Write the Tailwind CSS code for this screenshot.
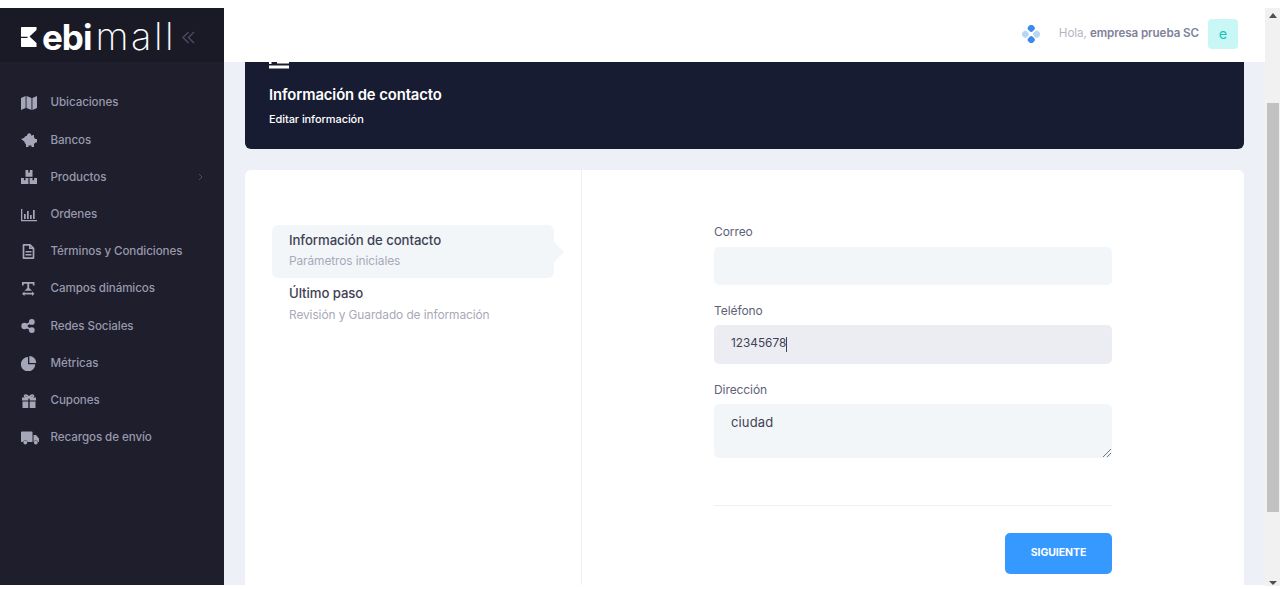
<!DOCTYPE html>
<html lang="es">
<head>
<meta charset="utf-8">
<script src="https://cdn.jsdelivr.net/npm/@tailwindcss/browser@4"></script>
<title>ebimall</title>
</head>
<body class="bg-white overflow-hidden">
<div class="h-[589px] w-[1280px] flex font-['Inter','Noto_Sans',sans-serif] tracking-[-0.005em]">
  <div class="w-[1265px] h-[585px] flex flex-col">
    <div class="h-[62px] flex">
      <div class="w-[224px] flex flex-col">
        <div class="h-[8px] bg-white"></div>
        <div class="h-[54px] bg-[#1a1a27] flex items-center pl-[21px]">
          <svg class="shrink-0 mt-[4px]" width="16" height="20" viewBox="0 0 16 20"><path fill="#fff" d="M1 0H15.500V3L8.500 9.500 15.500 16V20H1C.4 20 0 19.600 0 19V11H6.500V9.800H0V1C0 .4.400 0 1 0Z"/></svg>
          <div class="ml-[5px] mt-[1px] flex items-baseline text-white leading-none">
            <b class="font-bold text-[35px] tracking-[-1px]">ebi</b><span class="font-extralight text-[38px] tracking-[2.500px] ml-[4px]">mall</span>
          </div>
          <svg class="ml-[6px] mt-[4px]" width="13" height="13" viewBox="0 0 13 13" fill="none" stroke="#4b4b62" stroke-width="1.400"><path d="M6.500 1 1 6.500l5.500 5.500M12 1 6.500 6.500l5.500 5.500"/></svg>
        </div>
      </div>
      <div class="flex-1 bg-white flex items-center justify-end pr-[27px] pt-[6px]">
        <svg class="mr-[19px]" width="18" height="18" viewBox="0 0 18 18"><rect x="6" y="0" width="6.500" height="6.500" rx="2.500" fill="#3b8bea" transform="rotate(45 9.250 3.250)"/><rect x="6" y="11.500" width="6.500" height="6.500" rx="2.500" fill="#3b8bea" transform="rotate(45 9.250 14.750)"/><rect x="0" y="6" width="6.500" height="6.500" rx="2.500" fill="#b9d6f4" transform="rotate(45 3.250 9.250)"/><rect x="11.500" y="6" width="6.500" height="6.500" rx="2.500" fill="#b9d6f4" transform="rotate(45 14.750 9.250)"/></svg>
        <span class="text-[11.600px] text-[#b5b5c3] mr-[9px]">Hola, <b class="font-semibold text-[#7e8299]">empresa prueba SC</b></span>
        <div class="w-[30px] h-[30px] rounded-[4px] bg-[#c9f7f5] text-[#1bc5bd] text-[14.500px] flex items-center justify-center">e</div>
      </div>
    </div>
    <div class="flex-1 flex min-h-0">
      <nav class="w-[224px] bg-[#1e1e2d] pt-[22.500px] text-[11.600px] text-[#9899ac] font-medium">
        <ul class="flex flex-col">
          <li class="h-[37.2px] flex items-center pl-[21px]"><svg class="w-[16px] mr-[13.500px] shrink-0" width="16" height="14" viewBox="0 0 16 14" fill="#a5a6b8"><path d="M0 2 4.600 0v12L0 14ZM5.500 0l5 2v12l-5-2ZM11.400 2 16 0v12l-4.600 2Z"/></svg><span>Ubicaciones</span></li>
          <li class="h-[37.2px] flex items-center pl-[21px]"><svg class="w-[16px] mr-[13.500px] shrink-0 overflow-visible" width="16" height="14" viewBox="0 0 16 14" fill="#a5a6b8"><path d="M0 6 3 5C3.800 3.500 5 3 6 2.800 6 1 7 .2 8.300.2 9.500.2 10.300 1 10.300 2.800L13 1.800V4.500L14.500 6H16V9.500H14.500L13 11V14H10.500V12.500H7.500V14H5V11.500C4 10.500 3.500 9.500 3.300 8.500Z"/></svg><span>Bancos</span></li>
          <li class="h-[37.2px] flex items-center pl-[21px] pr-[21px]"><svg class="w-[16px] mr-[13.500px] shrink-0" width="16" height="14" viewBox="0 0 16 14" fill="#a5a6b8"><path fill-rule="evenodd" d="M4.500 0h7v6.800h-7ZM7.200 0v2.500h1.600V0ZM0 8h7.400v6H0ZM2.900 8v2.200h1.600V8ZM8.600 8H16v6H8.600ZM11.500 8v2.200h1.600V8Z"/></svg><span class="flex-1">Productos</span><svg width="5" height="8" viewBox="0 0 5 8" fill="none" stroke="#4b4b62"><path d="m1 1 3 3-3 3"/></svg></li>
          <li class="h-[37.2px] flex items-center pl-[21px]"><svg class="w-[16px] mr-[13.500px] shrink-0" width="16" height="14" viewBox="0 0 16 14" fill="#a5a6b8"><path d="M0 1h1.300v11H16v1.300H0ZM3 6h1.700v5H3ZM6 3h1.700v8H6ZM9 7h1.700v4H9ZM12 2h1.700v9H12Z"/></svg><span>Ordenes</span></li>
          <li class="h-[37.2px] flex items-center pl-[21px]"><svg class="w-[16px] mr-[13.500px] shrink-0" width="16" height="15" viewBox="0 0 16 15"><path fill="none" stroke="#a5a6b8" stroke-width="1.700" stroke-linejoin="round" d="M2.500 .9H9L12.500 4.400V14.100H2.500Z"/><path fill="#a5a6b8" d="M4.500 7h6v1.400h-6ZM4.500 10h6v1.400h-6ZM8 1h1.500v2.500H12.500V5H8Z"/></svg><span>Términos y Condiciones</span></li>
          <li class="h-[37.2px] flex items-center pl-[21px]"><svg class="w-[16px] mr-[13.500px] shrink-0" width="16" height="14" viewBox="0 0 16 14" fill="#a5a6b8"><path d="M1 0h12.500v3.500h-1.700V1.800H8.200v4.200L11 8.700H3.500L6.300 6V1.800H2.700v1.700H1ZM3.500 9.500v1.300h7.500V9.500L13.500 11.700 11 14v-1.400H3.500V14L1 11.700Z"/></svg><span>Campos dinámicos</span></li>
          <li class="h-[37.2px] flex items-center pl-[21px]"><svg class="w-[16px] mr-[13.500px] shrink-0" width="16" height="14" viewBox="0 0 16 14" fill="#a5a6b8"><circle cx="3.500" cy="7" r="3.200"/><circle cx="10.800" cy="2.900" r="2.900"/><circle cx="10.800" cy="11.100" r="2.900"/><path stroke="#a5a6b8" stroke-width="1.800" d="M3.500 7 10.800 2.900M3.500 7 10.800 11.100"/></svg><span>Redes Sociales</span></li>
          <li class="h-[37.2px] flex items-center pl-[21px]"><svg class="w-[16px] mr-[13.500px] shrink-0" width="16" height="15" viewBox="0 0 16 15" fill="#a5a6b8"><path d="M7 1V8.300H14.300A7.200 7.200 0 1 1 7 1Z"/><path d="M8.300 0A7 7 0 0 1 15.300 7H8.300Z"/></svg><span>Métricas</span></li>
          <li class="h-[37.2px] flex items-center pl-[21px]"><svg class="w-[16px] mr-[13.500px] shrink-0" width="16" height="14" viewBox="0 0 16 14" fill="#a5a6b8"><path d="M1 3.500h14v3H8.700v-2H7.300v2H1ZM1.500 7.500h5.800V14H1.500ZM8.700 7.500h5.800V14H8.700Z"/><path fill="none" stroke="#a5a6b8" stroke-width="1.500" d="M8 3.500C6 .5 3 .5 3.500 2.200 3.800 3.300 6 3.500 8 3.500 10 3.500 12.200 3.300 12.500 2.200 13 .5 10 .5 8 3.500Z"/></svg><span>Cupones</span></li>
          <li class="h-[37.2px] flex items-center pl-[21px]"><svg class="w-[18px] mr-[11.500px] shrink-0" width="18" height="14" viewBox="0 0 18 14" fill="#a5a6b8"><path d="M0 1.500C0 .8.500.5 1 .5h9.500c.6 0 1 .4 1 1V11H6.800A2.500 2.500 0 0 0 2 11H1c-.6 0-1-.4-1-1ZM12.500 4H15L18 7.500V11H17.200A2.500 2.500 0 0 0 12.500 11Z"/><circle cx="4.300" cy="11.500" r="1.900"/><circle cx="14.800" cy="11.500" r="1.900"/></svg><span>Recargos de envío</span></li>
        </ul>
      </nav>
      <main class="flex-1 bg-[#eef0f8] px-[21px] flex flex-col overflow-hidden">
        <section class="h-[87px] shrink-0 bg-[#181c32] rounded-b-[6px] pl-[24px] text-white">
          <svg class="block" width="20" height="7" viewBox="0 0 20 7" fill="#fff"><path d="M0 0h2.500v2H0ZM8 0h12v1.500H8ZM0 3.500h20V6.500H0Z"/></svg>
          <h2 class="text-[14.800px] font-semibold mt-[16px] leading-[20px]">Información de contacto</h2>
          <p class="text-[11px] font-medium mt-[7px] leading-[14px]">Editar información</p>
        </section>
        <section class="mt-[21px] flex-1 bg-white rounded-t-[6px] flex min-h-0">
          <aside class="w-[337px] border-r border-[#eef0f4] pt-[55px] pl-[27px]">
            <div class="relative w-[282px] h-[53px] bg-[#f3f6f9] rounded-[6px] pl-[17px] pt-[7px]">
              <p class="text-[13.200px] leading-[17px] text-[#3f4254] font-medium">Información de contacto</p>
              <p class="text-[11.900px] leading-[17px] mt-[2.500px] text-[#a9a9ba]">Parámetros iniciales</p>
              <div class="absolute -right-[10px] top-[17px] w-0 h-0 border-y-[10px] border-y-transparent border-l-[10px] border-l-[#f3f6f9]"></div>
            </div>
            <div class="pl-[17px] pt-[7px]">
              <p class="text-[13.200px] leading-[17px] text-[#3f4254] font-medium">Último paso</p>
              <p class="text-[11.900px] leading-[17px] mt-[4px] text-[#a9a9ba]">Revisión y Guardado de información</p>
            </div>
          </aside>
          <form class="pl-[132px] pt-[53px] w-[530px]">
            <label class="block text-[12px] leading-[18px] text-[#5e6278]">Correo</label>
            <div class="mt-[6px] h-[38px] bg-[#f3f6f9] rounded-[5px]"></div>
            <label class="block mt-[17px] text-[12px] leading-[18px] text-[#5e6278]">Teléfono</label>
            <div class="mt-[5px] h-[38.500px] bg-[#ebedf3] rounded-[5px] pl-[17px] flex items-center text-[11.800px] tracking-[0px] text-[#3f4254]">12345678<span class="w-px h-[15px] bg-[#3f4254]"></span></div>
            <label class="block mt-[17px] text-[12px] leading-[18px] text-[#5e6278]">Dirección</label>
            <div class="relative mt-[5.500px] h-[54px] bg-[#f3f6f9] rounded-[5px] pl-[17px] pt-[9px] text-[13px] tracking-[0.01em] leading-[18px] text-[#3f4254]">ciudad
              <svg class="absolute right-[1px] bottom-[1px]" width="8" height="8" viewBox="0 0 8 8" stroke="#777" fill="none"><path d="M0 8 8 0M4 8 8 4"/></svg>
            </div>
            <div class="mt-[47px] border-t border-[#eef0f4]"></div>
            <div class="mt-[27px] flex justify-end">
              <button type="button" class="w-[107px] h-[41px] rounded-[5px] bg-[#3699ff] text-white text-[10.500px] font-bold pb-[2px]">SIGUIENTE</button>
            </div>
          </form>
        </section>
      </main>
    </div>
  </div>
  <div class="w-[15px] mt-[8px] h-[578px] bg-[#f1f1f1] flex flex-col">
    <div class="h-[14px] flex items-center justify-center"><svg width="8" height="5" viewBox="0 0 8 5" fill="#505050"><path d="M4 0 8 5H0Z"/></svg></div>
    <div class="mt-[81px] ml-[2px] w-[12px] h-[409px] bg-[#c1c1c1]"></div>
    <div class="mt-auto h-[5px] flex justify-center"><svg width="8" height="4" viewBox="0 0 8 4" fill="#505050"><path d="M0 0H8L4 4Z"/></svg></div>
  </div>
</div>
</body>
</html>
